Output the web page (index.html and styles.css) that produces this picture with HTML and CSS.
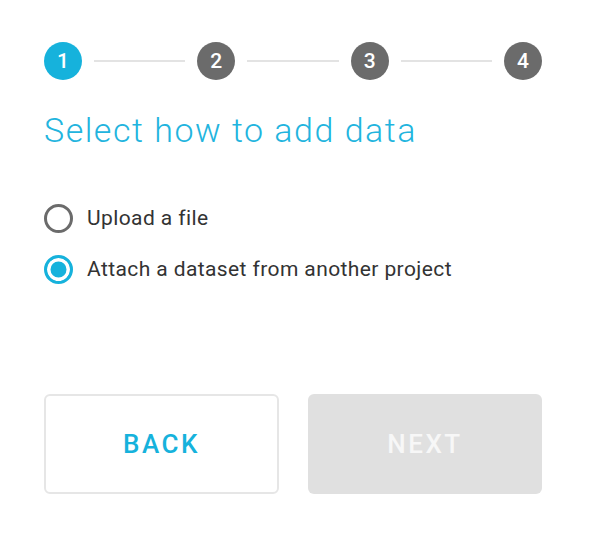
FILE: index.html
```html
<!DOCTYPE html>
<html>
<head>
<meta charset="utf-8">
<link rel="stylesheet" href="styles.css">
</head>
<body>
<div class="wizard">
  <div class="stepper">
    <span class="step active">1</span>
    <span class="line"></span>
    <span class="step">2</span>
    <span class="line"></span>
    <span class="step">3</span>
    <span class="line"></span>
    <span class="step">4</span>
  </div>
  <h1 class="title">Select how to add data</h1>
  <div class="options">
    <label class="option"><span class="radio"></span><span class="label">Upload a file</span></label>
    <label class="option"><span class="radio checked"></span><span class="label">Attach a dataset from another project</span></label>
  </div>
  <div class="actions">
    <button class="btn btn-back">BACK</button>
    <button class="btn btn-next">NEXT</button>
  </div>
</div>
</body>
</html>
```
FILE: styles.css
```css
html, body {
  margin: 0;
  padding: 0;
  background: #ffffff;
}
body {
  font-family: Roboto, "Liberation Sans", sans-serif;
}
.wizard {
  width: 498px;
  padding: 42px 0 0 44px;
}
.stepper {
  display: flex;
  align-items: center;
  height: 38px;
}
.step {
  width: 38px;
  height: 38px;
  border-radius: 50%;
  background: #6b6b6b;
  color: #ffffff;
  font-size: 21px;
  font-weight: 500;
  display: flex;
  align-items: center;
  justify-content: center;
  flex: none;
}
.step.active {
  background: #16b2dc;
}
.line {
  flex: 1;
  height: 2px;
  background: #e3e3e3;
  margin: 0 12px;
}
.title {
  margin: 30px 0 0 0;
  font-size: 34px;
  line-height: 40px;
  font-weight: 300;
  letter-spacing: 1.5px;
  color: #22b4de;
}
.options {
  margin-top: 53px;
  display: flex;
  flex-direction: column;
  gap: 21px;
}
.option {
  display: flex;
  align-items: center;
  height: 30px;
  gap: 14px;
}
.radio {
  width: 29px;
  height: 29px;
  box-sizing: border-box;
  border-radius: 50%;
  border: 3px solid #6b6b6b;
  background: #fff;
  flex: none;
}
.radio.checked {
  border-color: #16b2dc;
  background: #16b2dc;
  box-shadow: inset 0 0 0 3.5px #ffffff;
}
.label {
  font-size: 21px;
  letter-spacing: 0.4px;
  color: #333333;
}
.actions {
  margin-top: 110px;
  display: flex;
  gap: 29px;
}
.btn {
  height: 100px;
  border-radius: 6px;
  font-family: Roboto, "Liberation Sans", sans-serif;
  font-size: 26px;
  font-weight: 500;
  letter-spacing: 2.5px;
  padding: 0;
  box-sizing: border-box;
}
.btn-back {
  flex: 0 0 235px;
  background: #ffffff;
  border: 2px solid #e6e6e6;
  color: #16b2dc;
}
.btn-next {
  flex: 1;
  background: #e0e0e0;
  border: none;
  color: #f7f7f7;
}
```
